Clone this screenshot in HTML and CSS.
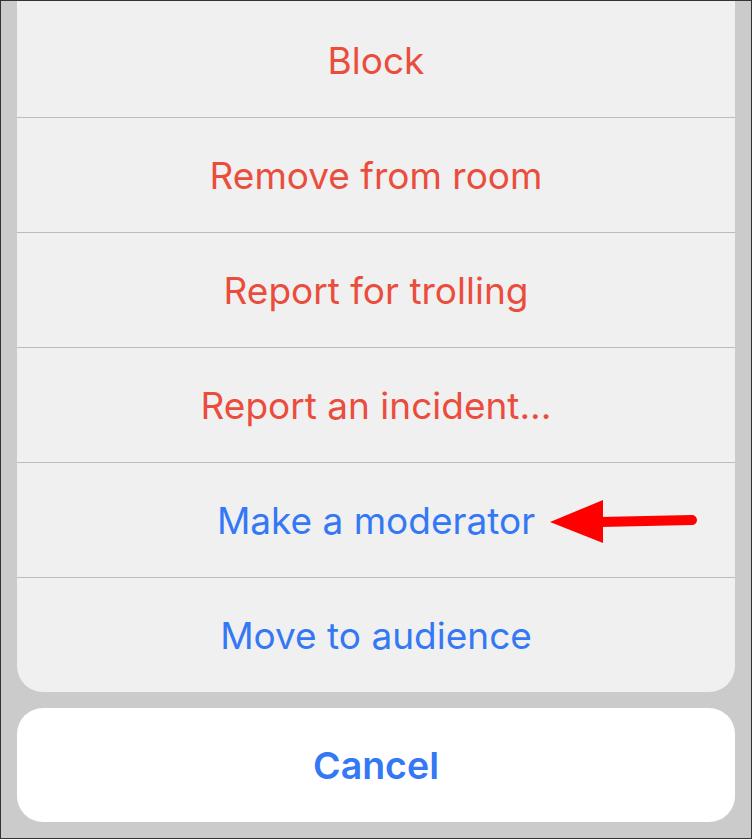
FILE: index.html
```html
<!DOCTYPE html>
<html lang="en">
<head>
<meta charset="utf-8">
<title>Action sheet</title>
<link rel="stylesheet" href="styles.css">
</head>
<body>
<div class="screen">
  <div class="sheet">
    <div class="action destructive first">Block</div>
    <div class="action destructive">Remove from room</div>
    <div class="action destructive">Report for trolling</div>
    <div class="action destructive">Report an incident...</div>
    <div class="action primary">Make a moderator</div>
    <div class="action primary last">Move to audience</div>
  </div>
  <div class="cancel">Cancel</div>
  <svg class="arrow" width="160" height="50" viewBox="0 0 160 50" aria-hidden="true">
    <line x1="50" y1="23" x2="142" y2="21" stroke="#ff0000" stroke-width="10" stroke-linecap="round"/>
    <polygon points="0,23 53,1 53,44" fill="#ff0000"/>
  </svg>
</div>
</body>
</html>
```
FILE: styles.css
```css
html, body {
  margin: 0;
  padding: 0;
}
body {
  width: 752px;
  height: 839px;
  font-family: Inter, "Noto Sans", "Liberation Sans", sans-serif;
}
.screen {
  position: relative;
  box-sizing: border-box;
  width: 752px;
  height: 839px;
  border: 1px solid #333333;
  background: #cbcbcb;
  padding: 0 16px 15px 16px;
  display: flex;
  flex-direction: column;
  gap: 16px;
}
.sheet {
  background: #f0f0f0;
  border-radius: 0 0 26px 26px;
  display: flex;
  flex-direction: column;
  overflow: hidden;
}
.action {
  height: 114px;
  display: flex;
  align-items: center;
  justify-content: center;
  font-size: 37px;
  border-bottom: 1px solid #bcbcbc;
}
.action.first {
  box-sizing: border-box;
  height: 117px;
  padding-top: 2px;
}
.action.last {
  border-bottom: none;
}
.destructive {
  color: #eb4d3d;
}
.primary {
  color: #3478f6;
}
.cancel {
  height: 114px;
  background: #ffffff;
  border-radius: 26px;
  display: flex;
  align-items: center;
  justify-content: center;
  font-size: 37.5px;
  font-weight: 600;
  color: #3478f6;
}
.arrow {
  position: absolute;
  left: 549px;
  top: 498px;
}
```
